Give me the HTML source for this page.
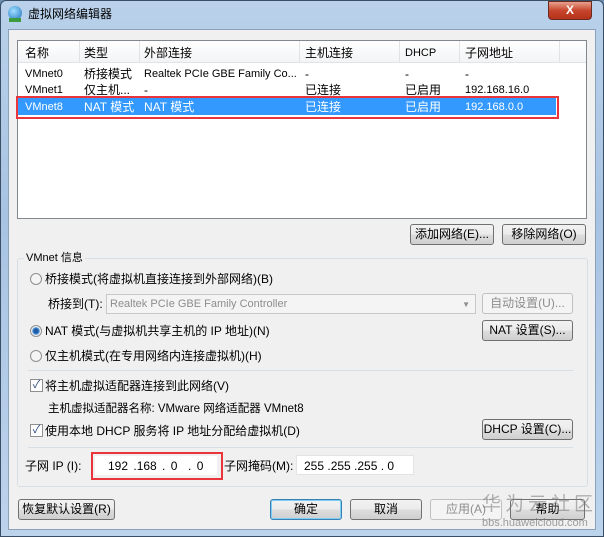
<!DOCTYPE html><html><head><meta charset="utf-8"><style>
*{margin:0;padding:0;box-sizing:border-box}
body{width:604px;height:537px;overflow:hidden;background:#6d8fb3;font-family:"Liberation Sans","Noto Sans CJK SC",sans-serif;font-size:12px;color:#000;position:relative}
.a{position:absolute;white-space:nowrap}
.frame{left:0;top:0;width:604px;height:537px;background:linear-gradient(#b9d1ea,#a8c3e2 40%,#bcd3ec);border:1px solid #3a4e66;border-radius:6px 6px 0 0}
.panel{left:8px;top:29px;width:588px;height:501px;background:#f0f0f0;border:1px solid #8aa0bb}
.btn{position:absolute;height:21px;border:1px solid #707070;border-radius:3px;background:linear-gradient(#f2f2f2,#ebebeb 50%,#dddddd 51%,#cfcfcf);text-align:center;line-height:19px;font-size:12px;white-space:nowrap}
.t{position:absolute;font-size:12px;line-height:14px;white-space:nowrap}
.radio{position:absolute;width:12px;height:12px;border:1px solid #8e8f8f;border-radius:50%;background:#f4f4f4}
.chk{position:absolute;width:13px;height:13px;border:1px solid #8e8f8f;background:#fff;font-size:11px;line-height:11px;text-align:center;color:#2a4a7a}
.s{font-size:11px}
</style></head><body>
<div class="a frame"></div>
<div class="a" style="left:8px;top:6px;width:14px;height:14px;border-radius:50%;background:radial-gradient(circle at 40% 35%,#9fe0ff,#1f6fc0)"></div>
<div class="a" style="left:9px;top:18px;width:12px;height:4px;background:#3c9b3c"></div>
<div class="t" style="left:28px;top:7px">虚拟网络编辑器</div>
<div class="a" style="left:548px;top:1px;width:44px;height:19px;border-radius:0 0 4px 4px;background:linear-gradient(#e8a18f,#c7452c 50%,#b6321b);border:1px solid #6b2a1f;color:#fff;font-weight:bold;text-align:center;line-height:17px">X</div>
<div class="a panel"></div>
<div class="a" style="left:17px;top:40px;width:570px;height:179px;background:#fff;border:1px solid #828790"></div>
<div class="a" style="left:18px;top:41px;width:568px;height:22px;background:linear-gradient(#fff,#f3f4f6);border-bottom:1px solid #e2e3e6"></div>
<div class="t" style="left:25px;top:46px">名称</div><div class="t" style="left:84px;top:46px">类型</div><div class="t" style="left:144px;top:46px">外部连接</div><div class="t" style="left:305px;top:46px">主机连接</div><div class="t s" style="left:405px;top:46px">DHCP</div><div class="t" style="left:465px;top:46px">子网地址</div>
<div class="a" style="left:79px;top:41px;width:1px;height:22px;background:#e2e3e6"></div><div class="a" style="left:139px;top:41px;width:1px;height:22px;background:#e2e3e6"></div><div class="a" style="left:299px;top:41px;width:1px;height:22px;background:#e2e3e6"></div><div class="a" style="left:399px;top:41px;width:1px;height:22px;background:#e2e3e6"></div><div class="a" style="left:459px;top:41px;width:1px;height:22px;background:#e2e3e6"></div><div class="a" style="left:559px;top:41px;width:1px;height:22px;background:#e2e3e6"></div>
<div class="t s" style="left:25px;top:67px">VMnet0</div><div class="t" style="left:84px;top:67px">桥接模式</div><div class="t s" style="left:144px;top:67px">Realtek PCIe GBE Family Co...</div><div class="t" style="left:305px;top:67px">-</div><div class="t" style="left:405px;top:67px">-</div><div class="t" style="left:465px;top:67px">-</div>
<div class="t s" style="left:25px;top:83px">VMnet1</div><div class="t" style="left:84px;top:83px">仅主机...</div><div class="t" style="left:144px;top:83px">-</div><div class="t" style="left:305px;top:83px">已连接</div><div class="t" style="left:405px;top:83px">已启用</div><div class="t s" style="left:465px;top:83px">192.168.16.0</div>
<div class="a" style="left:18px;top:98px;width:538px;height:17px;background:#3399ff"></div>
<div class="a" style="left:16px;top:96px;width:543px;height:23px;border:2px solid #e8343a"></div>
<div class="t s" style="left:25px;top:100px;color:#fff">VMnet8</div><div class="t" style="left:84px;top:100px;color:#fff">NAT 模式</div><div class="t" style="left:144px;top:100px;color:#fff">NAT 模式</div><div class="t" style="left:305px;top:100px;color:#fff">已连接</div><div class="t" style="left:405px;top:100px;color:#fff">已启用</div><div class="t s" style="left:465px;top:100px;color:#fff">192.168.0.0</div>
<div class="btn" style="left:410px;top:224px;width:84px">添加网络(E)...</div>
<div class="btn" style="left:502px;top:224px;width:84px">移除网络(O)</div>
<div class="a" style="left:17px;top:258px;width:571px;height:229px;border:1px solid #d5dfe5;border-radius:3px"></div>
<div class="t s" style="left:24px;top:251px;background:#f0f0f0;padding:0 2px">VMnet 信息</div>
<div class="radio" style="left:30px;top:273px"></div><div class="t" style="left:45px;top:272px">桥接模式(将虚拟机直接连接到外部网络)(B)</div>
<div class="t" style="left:48px;top:297px">桥接到(T):</div>
<div class="a" style="left:106px;top:294px;width:370px;height:20px;border:1px solid #c8c8c8;background:#f4f4f4;color:#8d8d8d;padding:3px 3px;font-size:11px;line-height:13px">Realtek PCIe GBE Family Controller<span style="position:absolute;right:5px;top:3px;font-size:8px">▼</span></div>
<div class="a" style="left:482px;top:293px;width:91px;height:21px;border:1px solid #c0c0c0;border-radius:3px;background:#f4f4f4;color:#8d8d8d;text-align:center;line-height:19px">自动设置(U)...</div>
<div class="radio" style="left:30px;top:325px;background:radial-gradient(circle,#1c5ca8 30%,#6fa8e0 50%,#f4f4f4 60%)"></div><div class="t" style="left:45px;top:324px">NAT 模式(与虚拟机共享主机的 IP 地址)(N)</div>
<div class="btn" style="left:482px;top:320px;width:91px">NAT 设置(S)...</div>
<div class="radio" style="left:30px;top:350px"></div><div class="t" style="left:45px;top:349px">仅主机模式(在专用网络内连接虚拟机)(H)</div>
<div class="a" style="left:28px;top:370px;width:545px;height:1px;background:#d5dfe5"></div>
<div class="chk" style="left:30px;top:379px">✓</div><div class="t" style="left:45px;top:379px">将主机虚拟适配器连接到此网络(V)</div>
<div class="t" style="left:48px;top:402px;font-size:11.5px">主机虚拟适配器名称: VMware 网络适配器 VMnet8</div>
<div class="chk" style="left:30px;top:424px">✓</div><div class="t" style="left:45px;top:424px">使用本地 DHCP 服务将 IP 地址分配给虚拟机(D)</div>
<div class="btn" style="left:482px;top:419px;width:91px">DHCP 设置(C)...</div>
<div class="a" style="left:28px;top:447px;width:545px;height:1px;background:#d5dfe5"></div>
<div class="t" style="left:25px;top:459px">子网 IP (I):</div>
<div class="a" style="left:91px;top:452px;width:132px;height:28px;border:2px solid #e8343a"></div>
<div class="a" style="left:95px;top:456px;width:122px;height:19px;background:#fff"></div>
<div class="t" style="left:108px;top:459px;word-spacing:2px">192 .168 . 0 &nbsp;. 0</div>
<div class="t" style="left:224px;top:459px">子网掩码(M):</div>
<div class="a" style="left:296px;top:455px;width:118px;height:20px;background:#fff;border:1px solid #e3e3e3"></div>
<div class="t" style="left:304px;top:459px">255 .255 .255 . 0</div>
<div class="btn" style="left:18px;top:499px;width:97px">恢复默认设置(R)</div>
<div class="btn" style="left:270px;top:499px;width:72px;border-color:#3c7fb1;box-shadow:inset 0 0 0 1px #7ad0f4">确定</div>
<div class="btn" style="left:350px;top:499px;width:72px">取消</div>
<div class="a" style="left:430px;top:499px;width:72px;height:21px;border:1px solid #c0c0c0;border-radius:3px;background:#f4f4f4;color:#8d8d8d;text-align:center;line-height:19px">应用(A)</div>
<div class="btn" style="left:510px;top:499px;width:75px">帮助</div>
<div class="t" style="left:482px;top:495px;font-size:19px;line-height:20px;color:rgba(120,120,120,.55);letter-spacing:4px">华为云社区</div>
<div class="t" style="left:482px;top:516px;font-size:11px;color:rgba(120,120,120,.7)">bbs.huaweicloud.com</div>
</body></html>
